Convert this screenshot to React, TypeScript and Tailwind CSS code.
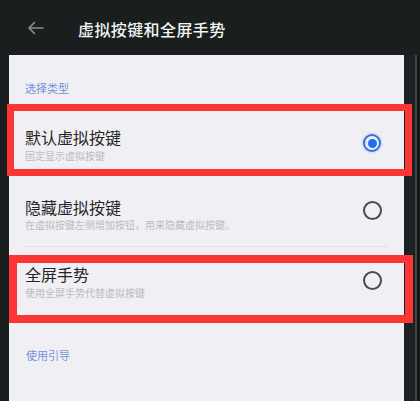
import React from 'react'

const font = { fontFamily: '"Noto Sans CJK SC", "Noto Sans", sans-serif' }

const Radio = ({ checked }: { checked?: boolean }) =>
    checked ? (
        <div className="w-[18px] h-[18px] rounded-full border-2 border-[#2f6fe0] flex items-center justify-center shadow-[0_0_3px_rgba(47,111,224,0.45)]">
            <div className="w-[9px] h-[9px] rounded-full bg-[#1f6fe6]" />
        </div>
    ) : (
        <div className="w-[19px] h-[19px] rounded-full border-2 border-[#4a4a4c]" />
    )

const App = () => {
    return (
        <div className="relative w-[420px] h-[401px] overflow-hidden bg-[#1a1e1e] flex flex-col" style={font}>
            {/* Header */}
            <div className="h-[55px] flex items-center shrink-0">
                <svg className="ml-[27px] mt-[1px]" width="17" height="14" viewBox="0 0 17 14" fill="none">
                    <path d="M16 7H2M7.5 1.5L2 7l5.5 5.5" stroke="#8a8d8d" strokeWidth="1.6" strokeLinecap="round" strokeLinejoin="round" />
                </svg>
                <span className="ml-[34px] mt-[2px] text-[16px] leading-[20px] text-[#f2f2f2] font-medium tracking-[0.4px]">虚拟按键和全屏手势</span>
            </div>

            <div className="flex flex-1">
                <div className="w-[9px] shrink-0" />
                {/* Screen */}
                <div className="w-[395px] bg-[#f0eff3] flex flex-col">
                    <div className="h-[56px] pt-[25px] pl-[16px] text-[11px] leading-[16px] text-[#7592dc]">选择类型</div>

                    {/* Item 1 */}
                    <div className="h-[65px] pt-[17px] pl-[16px] pr-[22px] flex items-start justify-between">
                        <div>
                            <div className="text-[16px] leading-[18px] text-[#262626]">默认虚拟按键</div>
                            <div className="mt-[4px] text-[10px] leading-[12px] text-[#bbbbbe]">固定显示虚拟按键</div>
                        </div>
                        <div className="mt-[6px] mr-[1px]"><Radio checked /></div>
                    </div>

                    {/* Item 2 */}
                    <div className="h-[70px] pt-[22px] pl-[16px] pr-[22px] flex items-start justify-between">
                        <div>
                            <div className="text-[16px] leading-[18px] text-[#262626]">隐藏虚拟按键</div>
                            <div className="mt-[3px] text-[10px] leading-[12px] text-[#bbbbbe]">在虚拟按键左侧增加按钮，用来隐藏虚拟按键。</div>
                        </div>
                        <div className="mt-[3px]"><Radio /></div>
                    </div>
                    <div className="mx-[16px] h-px bg-[#e0e0e4]" />

                    {/* Item 3 */}
                    <div className="pt-[18px] pl-[16px] pr-[22px] flex items-start justify-between">
                        <div>
                            <div className="text-[16px] leading-[18px] text-[#262626]">全屏手势</div>
                            <div className="mt-[4px] text-[10px] leading-[12px] text-[#bbbbbe]">使用全屏手势代替虚拟按键</div>
                        </div>
                        <div className="mt-[6px]"><Radio /></div>
                    </div>

                    <div className="mt-[48px] pl-[17px] text-[11px] leading-[16px] text-[#7592dc]">使用引导</div>
                </div>
                {/* Phone frame edge */}
                <div className="w-[11px] shrink-0 bg-[#1d2121]" />
                <div className="w-[2px] shrink-0 bg-[#3c4a45]" />
                <div className="flex-1 bg-[#151818]" />
            </div>

            {/* Annotation boxes */}
            <div className="absolute left-[7px] top-[104px] w-[405px] h-[72px] border-[7px] border-[#fc3535]" />
            <div className="absolute left-[9px] top-[255px] w-[404px] h-[68px] border-[8px] border-[#fc3535]" />
        </div>
    )
}

export default App
